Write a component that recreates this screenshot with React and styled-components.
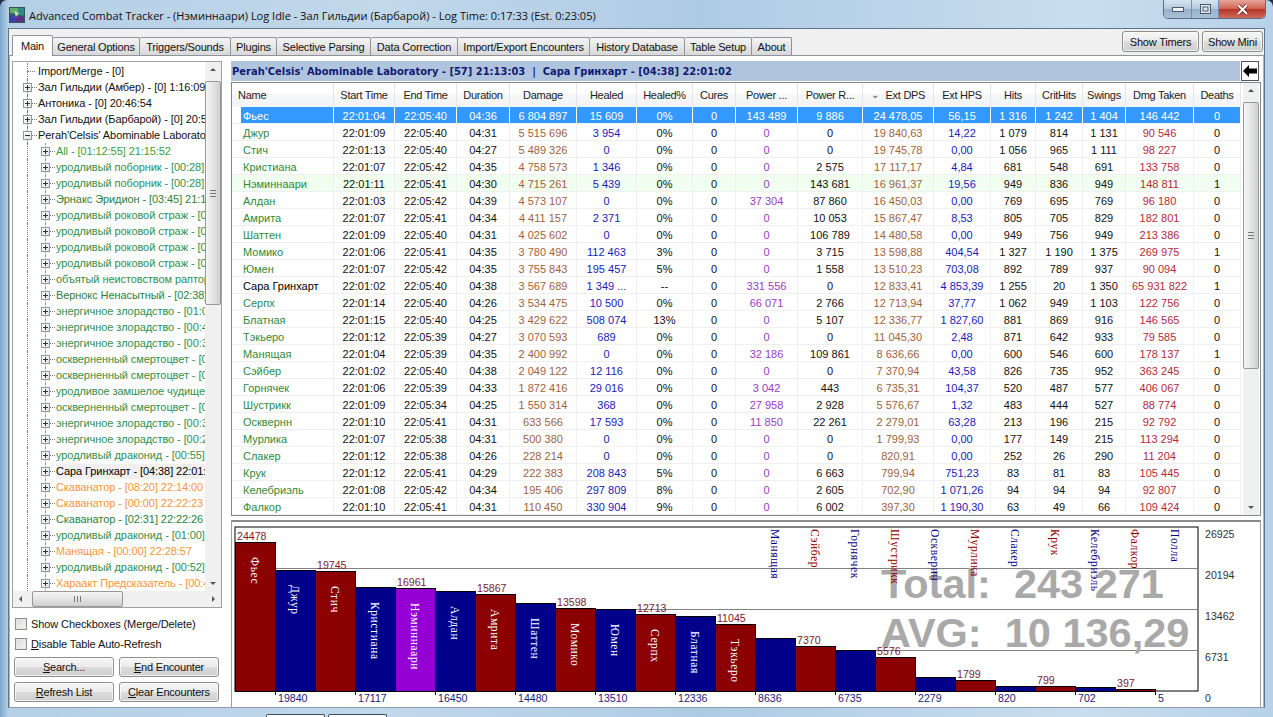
import React from 'react';
import styled, {createGlobalStyle} from 'styled-components';

const UI_FONT = '"Liberation Sans", Arial, sans-serif';

const tabs = [
    ['Main', 41], ['General Options', 87], ['Triggers/Sounds', 91], ['Plugins', 46], ['Selective Parsing', 94],
    ['Data Correction', 87], ['Import/Export Encounters', 132], ['History Database', 95], ['Table Setup', 67], ['About', 40],
];

const GREEN = '#2f8f4f';
const DARK_GREEN = '#2a7f3a';
const ORANGE = '#f7963a';

const treeItems = [
    {text: 'Import/Merge - [0]', level: 0, leaf: true},
    {text: 'Зал Гильдии (Амбер) - [0] 1:16:09', level: 0},
    {text: 'Антоника - [0] 20:46:54', level: 0},
    {text: 'Зал Гильдии (Барбарой) - [0] 20:51:12', level: 0},
    {text: "Perah'Celsis' Abominable Laboratory - [57]", level: 0, open: true},
    {text: 'All - [01:12:55] 21:15:52', level: 1, color: '#3aa03a'},
    {text: 'уродливый поборник - [00:28] 21:15:52', level: 1, color: GREEN},
    {text: 'уродливый поборник - [00:28] 21:16:40', level: 1, color: GREEN},
    {text: 'Эрнакс Эридион - [03:45] 21:17:30', level: 1, color: DARK_GREEN},
    {text: 'уродливый роковой страж - [00:31]', level: 1, color: GREEN},
    {text: 'уродливый роковой страж - [00:22]', level: 1, color: GREEN},
    {text: 'уродливый роковой страж - [00:40]', level: 1, color: GREEN},
    {text: 'уродливый роковой страж - [00:18]', level: 1, color: GREEN},
    {text: 'объятый неистовством раптор - [00:35]', level: 1, color: GREEN},
    {text: 'Вернокс Ненасытный - [02:38] 21:40:11', level: 1, color: DARK_GREEN},
    {text: 'энергичное злорадство - [01:02]', level: 1, color: GREEN},
    {text: 'энергичное злорадство - [00:44]', level: 1, color: GREEN},
    {text: 'энергичное злорадство - [00:37]', level: 1, color: GREEN},
    {text: 'оскверненный смертоцвет - [00:29]', level: 1, color: GREEN},
    {text: 'оскверненный смертоцвет - [00:25]', level: 1, color: GREEN},
    {text: 'уродливое замшелое чудище - [00:33]', level: 1, color: GREEN},
    {text: 'оскверненный смертоцвет - [00:21]', level: 1, color: GREEN},
    {text: 'энергичное злорадство - [00:30]', level: 1, color: GREEN},
    {text: 'энергичное злорадство - [00:28]', level: 1, color: GREEN},
    {text: 'уродливый драконид - [00:55] 21:58:40', level: 1, color: GREEN},
    {text: 'Сара Гринхарт - [04:38] 22:01:02', level: 1, color: '#000', current: true},
    {text: 'Скаванатор - [08:20] 22:14:00', level: 1, color: ORANGE},
    {text: 'Скаванатор - [00:00] 22:22:23', level: 1, color: ORANGE},
    {text: 'Скаванатор - [02:31] 22:22:26', level: 1, color: DARK_GREEN},
    {text: 'уродливый драконид - [01:00] 22:26:12', level: 1, color: GREEN},
    {text: 'Манящая - [00:00] 22:28:57', level: 1, color: ORANGE},
    {text: 'уродливый драконид - [00:52] 22:29:30', level: 1, color: GREEN},
    {text: 'Хараакт Предсказатель - [00:41]', level: 1, color: ORANGE},
];

const columns = [
    {title: 'Name', width: 102},
    {title: 'Start Time', width: 61},
    {title: 'End Time', width: 62},
    {title: 'Duration', width: 53},
    {title: 'Damage', width: 67, color: '#a0623c'},
    {title: 'Healed', width: 60, color: '#1a1ab8'},
    {title: 'Healed%', width: 56},
    {title: 'Cures', width: 43},
    {title: 'Power ...', width: 62, color: '#9a3cc4'},
    {title: 'Power R...', width: 65},
    {title: 'Ext DPS', width: 71, color: '#a0623c', sorted: true},
    {title: 'Ext HPS', width: 57, color: '#1a1ab8'},
    {title: 'Hits', width: 45},
    {title: 'CritHits', width: 47},
    {title: 'Swings', width: 43},
    {title: 'Dmg Taken', width: 68, color: '#b32a3a'},
    {title: 'Deaths', width: 47},
];

const gridColumns = columns.map((c) => `${c.width}px`).join(' ');

const players = [
    ['Фьес', '22:01:04', '22:05:40', '04:36', '6 804 897', '15 609', '0%', '0', '143 489', '9 886', '24 478,05', '56,15', '1 316', '1 242', '1 404', '146 442', '0'],
    ['Джур', '22:01:09', '22:05:40', '04:31', '5 515 696', '3 954', '0%', '0', '0', '0', '19 840,63', '14,22', '1 079', '814', '1 131', '90 546', '0'],
    ['Стич', '22:01:13', '22:05:40', '04:27', '5 489 326', '0', '0%', '0', '0', '0', '19 745,78', '0,00', '1 056', '965', '1 111', '98 227', '0'],
    ['Кристиана', '22:01:07', '22:05:42', '04:35', '4 758 573', '1 346', '0%', '0', '0', '2 575', '17 117,17', '4,84', '681', '548', '691', '133 758', '0'],
    ['Нэминнаари', '22:01:11', '22:05:41', '04:30', '4 715 261', '5 439', '0%', '0', '0', '143 681', '16 961,37', '19,56', '949', '836', '949', '148 811', '1'],
    ['Алдан', '22:01:03', '22:05:42', '04:39', '4 573 107', '0', '0%', '0', '37 304', '87 860', '16 450,03', '0,00', '769', '695', '769', '96 180', '0'],
    ['Амрита', '22:01:07', '22:05:41', '04:34', '4 411 157', '2 371', '0%', '0', '0', '10 053', '15 867,47', '8,53', '805', '705', '829', '182 801', '0'],
    ['Шаттен', '22:01:09', '22:05:40', '04:31', '4 025 602', '0', '0%', '0', '0', '106 789', '14 480,58', '0,00', '949', '756', '949', '213 386', '0'],
    ['Момико', '22:01:06', '22:05:41', '04:35', '3 780 490', '112 463', '3%', '0', '0', '3 715', '13 598,88', '404,54', '1 327', '1 190', '1 375', '269 975', '1'],
    ['Юмен', '22:01:07', '22:05:42', '04:35', '3 755 843', '195 457', '5%', '0', '0', '1 558', '13 510,23', '703,08', '892', '789', '937', '90 094', '0'],
    ['Сара Гринхарт', '22:01:02', '22:05:40', '04:38', '3 567 689', '1 349 ...', '--', '0', '331 556', '0', '12 833,41', '4 853,39', '1 255', '20', '1 350', '65 931 822', '1'],
    ['Серпх', '22:01:14', '22:05:40', '04:26', '3 534 475', '10 500', '0%', '0', '66 071', '2 766', '12 713,94', '37,77', '1 062', '949', '1 103', '122 756', '0'],
    ['Блатная', '22:01:15', '22:05:40', '04:25', '3 429 622', '508 074', '13%', '0', '0', '5 107', '12 336,77', '1 827,60', '881', '869', '916', '146 565', '0'],
    ['Тэкьеро', '22:01:12', '22:05:39', '04:27', '3 070 593', '689', '0%', '0', '0', '0', '11 045,30', '2,48', '871', '642', '933', '79 585', '0'],
    ['Манящая', '22:01:04', '22:05:39', '04:35', '2 400 992', '0', '0%', '0', '32 186', '109 861', '8 636,66', '0,00', '600', '546', '600', '178 137', '1'],
    ['Сэйбер', '22:01:02', '22:05:40', '04:38', '2 049 122', '12 116', '0%', '0', '0', '0', '7 370,94', '43,58', '826', '735', '952', '363 245', '0'],
    ['Горнячек', '22:01:06', '22:05:39', '04:33', '1 872 416', '29 016', '0%', '0', '3 042', '443', '6 735,31', '104,37', '520', '487', '577', '406 067', '0'],
    ['Шустрикк', '22:01:09', '22:05:34', '04:25', '1 550 314', '368', '0%', '0', '27 958', '2 928', '5 576,67', '1,32', '483', '444', '527', '88 774', '0'],
    ['Осквернн', '22:01:10', '22:05:41', '04:31', '633 566', '17 593', '0%', '0', '11 850', '22 261', '2 279,01', '63,28', '213', '196', '215', '92 792', '0'],
    ['Мурлика', '22:01:07', '22:05:38', '04:31', '500 380', '0', '0%', '0', '0', '0', '1 799,93', '0,00', '177', '149', '215', '113 294', '0'],
    ['Слакер', '22:01:12', '22:05:38', '04:26', '228 214', '0', '0%', '0', '0', '0', '820,91', '0,00', '252', '26', '290', '11 204', '0'],
    ['Крук', '22:01:12', '22:05:41', '04:29', '222 383', '208 843', '5%', '0', '0', '6 663', '799,94', '751,23', '83', '81', '83', '105 445', '0'],
    ['Келебриэль', '22:01:08', '22:05:42', '04:34', '195 406', '297 809', '8%', '0', '0', '2 605', '702,90', '1 071,26', '94', '94', '94', '92 807', '0'],
    ['Фалкор', '22:01:10', '22:05:41', '04:31', '110 450', '330 904', '9%', '0', '0', '6 002', '397,30', '1 190,30', '63', '49', '66', '109 424', '0'],
];

const bars = [
    ['Фьес', 24478], ['Джур', 19840], ['Стич', 19745], ['Кристиана', 17117], ['Нэминнаари', 16961], ['Алдан', 16450],
    ['Амрита', 15867], ['Шаттен', 14480], ['Момико', 13598], ['Юмен', 13510], ['Серпх', 12713], ['Блатная', 12336],
    ['Тэкьеро', 11045], ['Манящая', 8636], ['Сэйбер', 7370], ['Горнячек', 6735], ['Шустрикк', 5576], ['Осквернн', 2279],
    ['Мурлика', 1799], ['Слакер', 820], ['Крук', 799], ['Келебриэль', 702], ['Фалкор', 397], ['Полла', 5],
];

const axis = ['26925', '20194', '13462', '6731', '0'];

// chart drawing coordinates, relative to the chart panel
const PLOT_LEFT = 3;
const PLOT_TOP = 5;
const PLOT_BOTTOM = 169;
const PLOT_RIGHT = 966;
const BAR_WIDTH = 40.02;
const MAX_VALUE = 26925;

const barColor = (index) => {
    if (index === 4) return '#9400d3';
    return index % 2 === 0 ? '#8b0000' : '#00008b';
};

const DamageChart = () => {
    const plotHeight = PLOT_BOTTOM - PLOT_TOP;
    return (
        <ChartSvg viewBox="0 0 1028 186" width="1028" height="186">
            <rect x={PLOT_LEFT} y={PLOT_TOP} width={PLOT_RIGHT - PLOT_LEFT} height={plotHeight} fill="#fff" stroke="#000"/>
            {[1, 2, 3].map((n) => {
                const y = Math.round(PLOT_TOP + (plotHeight * n) / 4) + 0.5;
                return <line key={n} x1={PLOT_LEFT} x2={PLOT_RIGHT} y1={y} y2={y} stroke="#808080"/>;
            })}
            <BigText x="649" y="76">Total:  243 271</BigText>
            <BigText x="649" y="125">AVG:  10 136,29</BigText>
            {bars.map(([name, value], i) => {
                const x = Math.round(PLOT_LEFT + i * BAR_WIDTH);
                const next = Math.round(PLOT_LEFT + (i + 1) * BAR_WIDTH);
                const h = (value / MAX_VALUE) * plotHeight;
                const top = PLOT_BOTTOM - h;
                const cx = (x + next) / 2;
                const inside = h > 65;
                return (
                    <g key={name}>
                        <rect x={x + 0.5} y={Math.round(top) + 0.5} width={next - x} height={Math.max(Math.round(h), 0)} fill={barColor(i)} stroke="#000"/>
                        {i % 2 === 0 ? (
                            <ValueText x={x + 2} y={Math.round(top) - 2} fill="#7d1a2a">{value}</ValueText>
                        ) : (
                            <ValueText x={x + 3} y={PLOT_BOTTOM + 11} fill="#1c1c7c">{value}</ValueText>
                        )}
                        {i % 2 === 1 && <line x1={x + 0.5} x2={x + 0.5} y1={PLOT_BOTTOM} y2={PLOT_BOTTOM + 4} stroke="#000"/>}
                        <BarLabel
                            transform={`translate(${cx - 4} ${inside ? Math.round(top) + 15 : PLOT_TOP + 2}) rotate(90)`}
                            fill={inside ? '#fff' : barColor(i)}
                        >
                            {name}
                        </BarLabel>
                    </g>
                );
            })}
            {axis.map((label, i) => (
                <ValueText key={label} x="973" y={16 + i * 41} fill="#333">{label}</ValueText>
            ))}
        </ChartSvg>
    );
};

const Arrow = ({dir}) => {
    const shapes = {
        up: '1,5 4,2 7,5',
        down: '1,3 4,6 7,3',
        left: '5,1 2,4 5,7',
        right: '3,1 6,4 3,7',
    };
    return (
        <svg width="8" height="8" viewBox="0 0 8 8">
            <polygon points={shapes[dir]} fill="#555"/>
        </svg>
    );
};

const WindowIcon = () => (
    <svg width="16" height="16" viewBox="0 0 16 16">
        <rect width="16" height="16" fill="#2f6f4f" stroke="#33444f" strokeWidth="1"/>
        <path d="M1 1h8v5H1z" fill="#5fae6a"/>
        <path d="M9 1h6v7H9z" fill="#2a8a8a"/>
        <path d="M1 8h6v7H1z" fill="#3e3fa8"/>
        <path d="M7 9h8v6H7z" fill="#5a2f86"/>
        <path d="M5 4l5 2-3 4z" fill="#c8d8c0"/>
    </svg>
);

const App = () => (
    <>
        <GlobalStyle/>
        <Frame>
            <TitleBar>
                <WindowIcon/>
                <TitleText>Advanced Combat Tracker - (Нэминнаари) Log Idle - Зал Гильдии (Барбарой) - Log Time: 0:17:33 (Est. 0:23:05)</TitleText>
                <WindowButtons>
                    <CaptionButton $w={28}>
                        <svg width="12" height="6" viewBox="0 0 12 6"><rect x="0.5" y="1.5" width="11" height="4" fill="#eef3f8" stroke="#4a5a6a"/></svg>
                    </CaptionButton>
                    <CaptionButton $w={27}>
                        <svg width="11" height="10" viewBox="0 0 11 10"><rect x="0.5" y="0.5" width="10" height="9" fill="#dfe8f0" stroke="#4a5a6a"/><rect x="3" y="3" width="5" height="4" fill="none" stroke="#4a5a6a"/></svg>
                    </CaptionButton>
                    <CloseButton>
                        <svg width="13" height="11" viewBox="0 0 13 11">
                            <path d="M2 1l9 9M11 1l-9 9" stroke="#6a2020" strokeWidth="3.4"/>
                            <path d="M2 1l9 9M11 1l-9 9" stroke="#fff" strokeWidth="2"/>
                        </svg>
                    </CloseButton>
                </WindowButtons>
            </TitleBar>
            <Client>
                <TabStrip>
                    {tabs.map(([label, width], i) => (
                        <Tab key={label} $w={width} $active={i === 0}>{label}</Tab>
                    ))}
                    <StripButtons>
                        <PushButton $w={77}>Show Timers</PushButton>
                        <PushButton $w={61}>Show Mini</PushButton>
                    </StripButtons>
                </TabStrip>
                <TabPanel>
                    <LeftColumn>
                        <TreeBox>
                            <TreeBody>
                                <TreeList>
                                    {treeItems.map((item, i) => (
                                        <TreeRow key={i} $level={item.level}>
                                            {item.leaf ? <LeafDots/> : <Expander $open={item.open}/>}
                                            {!item.leaf && <Connector/>}
                                            <TreeLabel $color={item.color} $current={item.current}>{item.text}</TreeLabel>
                                        </TreeRow>
                                    ))}
                                </TreeList>
                                <VScroll>
                                    <ScrollEnd><Arrow dir="up"/></ScrollEnd>
                                    <VThumb $h={224} $top={3}/>
                                    <ScrollSpacer/>
                                    <ScrollEnd><Arrow dir="down"/></ScrollEnd>
                                </VScroll>
                            </TreeBody>
                            <HScroll>
                                <ScrollEnd><Arrow dir="left"/></ScrollEnd>
                                <HThumb/>
                                <ScrollSpacer/>
                                <ScrollEnd><Arrow dir="right"/></ScrollEnd>
                            </HScroll>
                        </TreeBox>
                        <CheckRow $first>
                            <CheckBox/>
                            <span>Show Checkboxes (Merge/Delete)</span>
                        </CheckRow>
                        <CheckRow>
                            <CheckBox/>
                            <span><u>D</u>isable Table Auto-Refresh</span>
                        </CheckRow>
                        <ActionGrid>
                            <PushButton><u>S</u>earch...</PushButton>
                            <PushButton><u>E</u>nd Encounter</PushButton>
                            <PushButton><u>R</u>efresh List</PushButton>
                            <PushButton><u>C</u>lear Encounters</PushButton>
                        </ActionGrid>
                    </LeftColumn>
                    <RightColumn>
                        <EncounterBar>
                            <EncounterTitle>Perah'Celsis' Abominable Laboratory - [57] 21:13:03&nbsp; | &nbsp;Сара Гринхарт - [04:38] 22:01:02</EncounterTitle>
                            <BackButton>
                                <svg width="14" height="12" viewBox="0 0 14 12"><path d="M0 6l6-6v3.5h8v5H6V12z" fill="#000"/></svg>
                            </BackButton>
                        </EncounterBar>
                        <TableBox>
                            <TableArea>
                                <HeaderRow>
                                    {columns.map((col, i) => (
                                        <HeaderCell key={col.title} $first={i === 0}>
                                            {col.sorted && <SortMark>⌄</SortMark>}
                                            {col.title}
                                        </HeaderCell>
                                    ))}
                                </HeaderRow>
                                {players.map((row, r) => (
                                    <DataRow key={row[0]} $selected={r === 0} $own={r === 4}>
                                        {row.map((value, c) => (
                                            <DataCell
                                                key={c}
                                                $name={c === 0}
                                                $selected={r === 0}
                                                $color={c === 0 ? (r === 10 ? '#000' : '#2f8a3a') : columns[c].color}
                                            >
                                                {value}
                                            </DataCell>
                                        ))}
                                    </DataRow>
                                ))}
                            </TableArea>
                            <TableScroll>
                                <ScrollEnd><Arrow dir="up"/></ScrollEnd>
                                <VThumb $h={267} $top={3}/>
                                <ScrollSpacer/>
                                <ScrollEnd><Arrow dir="down"/></ScrollEnd>
                            </TableScroll>
                        </TableBox>
                        <ChartBox>
                            <DamageChart/>
                        </ChartBox>
                    </RightColumn>
                </TabPanel>
            </Client>
            <PeekRow>
                <PeekTab/>
                <PeekTab/>
            </PeekRow>
        </Frame>
    </>
);

const GlobalStyle = createGlobalStyle`
  html, body {
    margin: 0;
    padding: 0;
    background: #26323e;
  }
  * {
    box-sizing: border-box;
  }
`;

const Frame = styled.div`
  width: 1273px;
  height: 717px;
  overflow: hidden;
  display: flex;
  flex-direction: column;
  padding: 0 8px;
  border-radius: 7px 7px 0 0;
  font-family: ${UI_FONT};
  font-size: 11px;
  color: #111;
  background: linear-gradient(90deg, #7fa8cf 0, #b4cfe6 8px, #c2d8eb 30%, #aecbe4 55%, #c9deef 85%, #b7d1e8 100%);
`;

const TitleBar = styled.div`
  height: 28px;
  flex: none;
  display: flex;
  align-items: center;
  padding: 2px 0 0 1px;
  gap: 4px;
`;

const TitleText = styled.span`
  font-family: "Open Sans", "Noto Sans", sans-serif;
  font-size: 11px;
  color: #101010;
  white-space: nowrap;
`;

const WindowButtons = styled.div`
  display: flex;
  margin: -2px -1px 0 auto;
  align-self: flex-start;
  height: 19px;
  border: 1px solid #5a6f85;
  border-top: none;
  border-radius: 0 0 5px 5px;
  overflow: hidden;
`;

const CaptionButton = styled.div`
  width: ${(p) => p.$w}px;
  display: flex;
  align-items: center;
  justify-content: center;
  border-right: 1px solid #7b90a6;
  background: linear-gradient(180deg, #d7e4f0, #b3c8dc 50%, #97b0c8 51%, #a9c2d8);
`;

const CloseButton = styled.div`
  width: 46px;
  display: flex;
  align-items: center;
  justify-content: center;
  background: linear-gradient(180deg, #e6a69a, #d2604f 50%, #b5342a 51%, #cf6a5a);
`;

const Client = styled.div`
  flex: none;
  height: 680px;
  display: flex;
  flex-direction: column;
  background: #f0f0f0;
  border: 1px solid #5f7488;
  border-bottom-color: #8a9cae;
`;

const TabStrip = styled.div`
  height: 26px;
  flex: none;
  display: flex;
  align-items: flex-end;
  padding-left: 3px;
`;

const Tab = styled.div`
  width: ${(p) => p.$w}px;
  height: ${(p) => (p.$active ? 21 : 18)}px;
  display: flex;
  align-items: center;
  justify-content: center;
  white-space: nowrap;
  font-size: 11px;
  letter-spacing: -0.18px;
  border: 1px solid #8e9499;
  border-left-width: ${(p) => (p.$active ? 1 : 0)}px;
  border-bottom: none;
  border-radius: 2px 2px 0 0;
  position: relative;
  z-index: ${(p) => (p.$active ? 1 : 0)};
  margin-bottom: ${(p) => (p.$active ? -1 : 0)}px;
  background: ${(p) => (p.$active ? '#fff' : 'linear-gradient(180deg, #f4f4f4, #e6e6e6 50%, #d8d8d8)')};
`;

const StripButtons = styled.div`
  margin-left: auto;
  display: flex;
  gap: 3px;
  padding: 0 1px 3px 0;
`;

const PushButton = styled.div`
  width: ${(p) => (p.$w ? `${p.$w}px` : 'auto')};
  height: ${(p) => (p.$w ? 21 : 20)}px;
  display: flex;
  align-items: center;
  justify-content: center;
  white-space: pre;
  font-size: 11px;
  letter-spacing: -0.2px;
  border: 1px solid #8e8f8f;
  border-radius: 3px;
  background: linear-gradient(180deg, #f6f6f6, #ebebeb 48%, #dcdcdc 50%, #cfcfcf);
  box-shadow: inset 0 0 0 1px rgba(255, 255, 255, 0.7);
`;

const TabPanel = styled.div`
  flex: 1;
  min-height: 0;
  display: flex;
  gap: 9px;
  padding: 5px 3px 0 2px;
  background: #fff;
  border-top: 1px solid #8e9499;
  border-left: 1px solid #b0b4b8;
  border-right: 1px solid #b0b4b8;
  overflow: hidden;
`;

const LeftColumn = styled.div`
  width: 210px;
  flex: none;
`;

const TreeBox = styled.div`
  height: 547px;
  border: 1px solid #a0a0a0;
  display: flex;
  flex-direction: column;
`;

const TreeBody = styled.div`
  flex: 1;
  min-height: 0;
  display: flex;
`;

const TreeList = styled.div`
  flex: 1;
  min-width: 0;
  overflow: hidden;
  padding-top: 1px;
`;

const TreeRow = styled.div`
  height: 16px;
  display: flex;
  align-items: center;
  padding-left: ${(p) => (p.$level === 1 ? 28 : 10)}px;
  position: relative;

  &::before {
    content: '';
    position: absolute;
    left: 14px;
    top: 0;
    bottom: 0;
    border-left: 1px dotted #777;
  }

  &::after {
    content: '';
    position: absolute;
    left: 32px;
    top: 0;
    bottom: 0;
    border-left: ${(p) => (p.$level === 1 ? '1px dotted #999' : 'none')};
  }
`;

const Expander = styled.span`
  width: 9px;
  height: 9px;
  flex: none;
  border: 1px solid #8a9aa8;
  background: linear-gradient(135deg, #fff, #dfe3e6);
  position: relative;
  z-index: 1;

  &::before {
    content: '';
    position: absolute;
    left: 1px;
    right: 1px;
    top: 3px;
    height: 1px;
    background: #333;
  }

  &::after {
    content: '';
    position: absolute;
    top: 1px;
    bottom: 1px;
    left: 3px;
    width: 1px;
    background: ${(p) => (p.$open ? 'transparent' : '#333')};
  }
`;

const Connector = styled.span`
  width: 5px;
  margin-right: 1px;
  flex: none;
  border-top: 1px dotted #777;
`;

const LeafDots = styled.span`
  width: 8px;
  margin: 0 3px 0 4px;
  flex: none;
  border-top: 1px dotted #777;
`;

const TreeLabel = styled.span`
  white-space: nowrap;
  font-size: 11px;
  letter-spacing: -0.08px;
  line-height: 15px;
  color: ${(p) => p.$color || '#111'};
  background: ${(p) => (p.$current ? '#f0f0f0' : 'transparent')};
`;

const VScroll = styled.div`
  width: 16px;
  flex: none;
  display: flex;
  flex-direction: column;
  background: #f0f0f0;
`;

const TableScroll = styled(VScroll)`
  margin: 0 1px 0 2px;
`;

const HScroll = styled.div`
  height: 16px;
  flex: none;
  display: flex;
  background: #f0f0f0;
`;

const ScrollEnd = styled.div`
  flex: none;
  min-width: 16px;
  min-height: 16px;
  display: flex;
  align-items: center;
  justify-content: center;
`;

const ScrollSpacer = styled.div`
  flex: 1;
`;

const VThumb = styled.div`
  height: ${(p) => p.$h}px;
  margin-top: ${(p) => p.$top}px;
  flex: none;
  border: 1px solid #979797;
  border-radius: 2px;
  background:
    linear-gradient(#777, #777) center calc(50% - 3px) / 6px 1px no-repeat,
    linear-gradient(#777, #777) center 50% / 6px 1px no-repeat,
    linear-gradient(#777, #777) center calc(50% + 3px) / 6px 1px no-repeat,
    linear-gradient(90deg, #f6f6f6, #e4e4e4 50%, #cfcfcf);
`;

const HThumb = styled.div`
  width: 91px;
  margin-left: 3px;
  flex: none;
  border: 1px solid #979797;
  border-radius: 2px;
  background:
    linear-gradient(#777, #777) calc(50% - 3px) center / 1px 6px no-repeat,
    linear-gradient(#777, #777) 50% center / 1px 6px no-repeat,
    linear-gradient(#777, #777) calc(50% + 3px) center / 1px 6px no-repeat,
    linear-gradient(180deg, #f6f6f6, #e4e4e4 50%, #cfcfcf);
`;

const CheckRow = styled.div`
  height: 20px;
  display: flex;
  align-items: center;
  gap: 4px;
  padding-left: 3px;
  margin-top: ${(p) => (p.$first ? 6 : 0)}px;
  font-size: 11px;
  letter-spacing: -0.1px;
  white-space: nowrap;
`;

const CheckBox = styled.span`
  width: 12px;
  height: 12px;
  flex: none;
  border: 1px solid #8e8f8f;
  background: linear-gradient(135deg, #d8d8d8, #f6f6f6);
  box-shadow: inset 0 0 0 1px #e6e6e6;
`;

const ActionGrid = styled.div`
  display: grid;
  grid-template-columns: 100px 100px;
  gap: 5px;
  margin: 3px 0 0 2px;
`;

const RightColumn = styled.div`
  width: 1030px;
  flex: none;
  display: flex;
  flex-direction: column;
`;

const EncounterBar = styled.div`
  height: 20px;
  flex: none;
  display: flex;
  gap: 1px;
`;

const EncounterTitle = styled.div`
  width: 1009px;
  padding: 0 1px;
  display: flex;
  align-items: center;
  white-space: pre;
  background: #b0c4de;
  font-family: "DejaVu Sans", sans-serif;
  font-weight: 700;
  font-size: 9.95px;
  color: #101a72;
`;

const BackButton = styled.div`
  width: 18px;
  display: flex;
  align-items: center;
  justify-content: center;
  border: 1px solid #555;
  background: #fff;
`;

const TableBox = styled.div`
  height: 434px;
  margin-top: 1px;
  flex: none;
  display: flex;
  border: 1px solid #828790;
  background: #fff;
`;

const TableArea = styled.div`
  width: 1009px;
  flex: none;
  overflow: hidden;
`;

const HeaderRow = styled.div`
  height: 24px;
  display: grid;
  grid-template-columns: ${gridColumns};
  background: linear-gradient(180deg, #fff, #fff 40%, #f6f7f9 50%, #f2f3f5);
`;

const HeaderCell = styled.div`
  display: flex;
  align-items: center;
  justify-content: ${(p) => (p.$first ? 'flex-start' : 'center')};
  padding-left: ${(p) => (p.$first ? 6 : 0)}px;
  white-space: nowrap;
  font-size: 11px;
  letter-spacing: -0.28px;
  color: #222;
  border-right: 1px solid #e3e5e8;
  position: relative;
`;

const SortMark = styled.span`
  font-size: 10px;
  color: #555;
  margin-right: 7px;
  line-height: 8px;
`;

const DataRow = styled.div`
  height: 17px;
  display: grid;
  grid-template-columns: ${gridColumns};
  background: ${(p) => (p.$own ? '#f0fff0' : 'transparent')};
  border-bottom: 1px solid #f0f0f0;
`;

const DataCell = styled.div`
  display: flex;
  align-items: center;
  justify-content: ${(p) => (p.$name ? 'flex-start' : 'center')};
  padding-left: ${(p) => (p.$name ? 2 : 0)}px;
  padding-top: 1px;
  margin-left: ${(p) => (p.$name ? 9 : 0)}px;
  white-space: nowrap;
  overflow: hidden;
  font-size: 11px;
  color: ${(p) => (p.$selected ? '#fff' : p.$color || '#111')};
  background: ${(p) => (p.$selected ? '#3399ff' : 'transparent')};
  border-right: 1px solid ${(p) => (p.$selected ? '#fff' : '#f0f0f0')};
`;

const ChartBox = styled.div`
  height: 187px;
  margin-top: 4px;
  flex: none;
  background: #fff;
  border-top: 2px solid #8a8a8a;
  border-left: 1px solid #a0a0a0;
  border-right: 1px solid #a0a0a0;
  overflow: hidden;
`;

const ChartSvg = styled.svg`
  display: block;
`;

const BigText = styled.text`
  font-family: "Liberation Sans", Arial, sans-serif;
  font-weight: 700;
  font-size: 41.5px;
  fill: #a9a9a9;
  white-space: pre;
`;

const ValueText = styled.text`
  font-family: "Liberation Sans", Arial, sans-serif;
  font-size: 10.6px;
`;

const BarLabel = styled.text`
  font-family: "Liberation Serif", "Times New Roman", serif;
  font-size: 11.5px;
  letter-spacing: 0.6px;
`;

const PeekRow = styled.div`
  flex: 1;
  display: flex;
  align-items: flex-end;
  gap: 3px;
  padding-left: 258px;
`;

const PeekTab = styled.div`
  width: 59px;
  height: 3px;
  background: #fff;
  border: 1px solid #3c4c5c;
  border-bottom: none;
  border-radius: 2px 2px 0 0;
`;

export default App;
